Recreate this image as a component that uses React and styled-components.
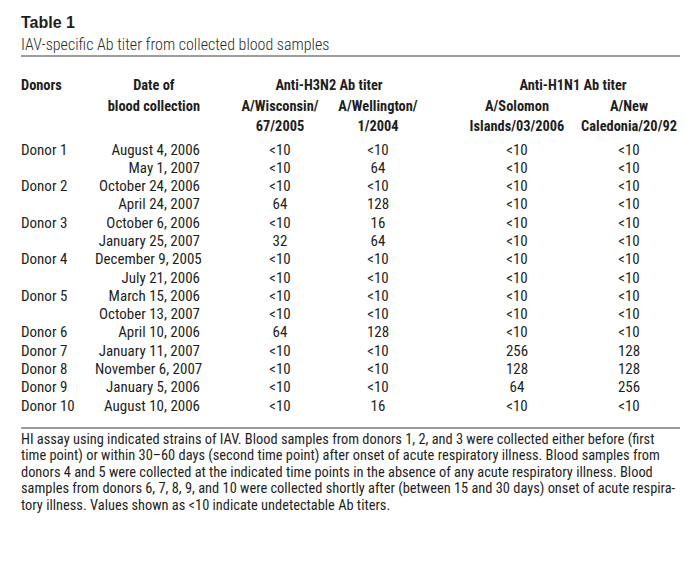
import React from 'react'
import styled, { createGlobalStyle } from 'styled-components'

const GlobalStyle = createGlobalStyle`
  body {
    margin: 0;
    background: #fff;
    color: #1e1e1e;
    font-family: Roboto, "Liberation Sans", sans-serif;
    font-stretch: condensed;
  }
`

const COLS = '74px 105px 31px 98px 98px 34px 112px 112px'

const rows = [
  ['Donor 1', 'August 4, 2006', '<10', '<10', '<10', '<10'],
  ['', 'May 1, 2007', '<10', '64', '<10', '<10'],
  ['Donor 2', 'October 24, 2006', '<10', '<10', '<10', '<10'],
  ['', 'April 24, 2007', '64', '128', '<10', '<10'],
  ['Donor 3', 'October 6, 2006', '<10', '16', '<10', '<10'],
  ['', 'January 25, 2007', '32', '64', '<10', '<10'],
  ['Donor 4', 'December 9, 2005', '<10', '<10', '<10', '<10'],
  ['', 'July 21, 2006', '<10', '<10', '<10', '<10'],
  ['Donor 5', 'March 15, 2006', '<10', '<10', '<10', '<10'],
  ['', 'October 13, 2007', '<10', '<10', '<10', '<10'],
  ['Donor 6', 'April 10, 2006', '64', '128', '<10', '<10'],
  ['Donor 7', 'January 11, 2007', '<10', '<10', '256', '128'],
  ['Donor 8', 'November 6, 2007', '<10', '<10', '128', '128'],
  ['Donor 9', 'January 5, 2006', '<10', '<10', '64', '256'],
  ['Donor 10', 'August 10, 2006', '<10', '16', '<10', '<10'],
]

const valueCols = [4, 5, 7, 8]

function App() {
  return (
    <Page>
      <GlobalStyle />
      <Title>Table 1</Title>
      <Subtitle>IAV-specific Ab titer from collected blood samples</Subtitle>
      <Rule />

      <Header>
        <HeadCell $col="1" $row="1" $align="left">Donors</HeadCell>
        <DateHead>
          Date of<br />
          blood collection
        </DateHead>
        <HeadCell $col="4 / 6" $row="1">Anti-H3N2 Ab titer</HeadCell>
        <HeadCell $col="7 / 9" $row="1">Anti-H1N1 Ab titer</HeadCell>
        <HeadCell $col="4" $row="2">A/Wisconsin/</HeadCell>
        <HeadCell $col="4" $row="3">67/2005</HeadCell>
        <HeadCell $col="5" $row="2">A/Wellington/</HeadCell>
        <HeadCell $col="5" $row="3">1/2004</HeadCell>
        <HeadCell $col="7" $row="2">A/Solomon</HeadCell>
        <HeadCell $col="7" $row="3">Islands/03/2006</HeadCell>
        <HeadCell $col="8" $row="2">A/New</HeadCell>
        <HeadCell $col="8" $row="3">Caledonia/20/92</HeadCell>
      </Header>

      <Body>
        {rows.map((r, i) => (
          <Row key={i}>
            <Cell $col="1" $align="left">{r[0]}</Cell>
            <Cell $col="2" $align="right">{r[1]}</Cell>
            {r.slice(2).map((v, j) => (
              <Cell key={j} $col={valueCols[j]}>{v}</Cell>
            ))}
          </Row>
        ))}
      </Body>

      <Rule $gap="12px" />

      <Note>
        HI assay using indicated strains of IAV. Blood samples from donors 1, 2, and 3 were collected either before (first<br />
        time point) or within 30–60 days (second time point) after onset of acute respiratory illness. Blood samples from<br />
        donors 4 and 5 were collected at the indicated time points in the absence of any acute respiratory illness. Blood<br />
        samples from donors 6, 7, 8, 9, and 10 were collected shortly after (between 15 and 30 days) onset of acute respira-<br />
        tory illness. Values shown as &lt;10 indicate undetectable Ab titers.
      </Note>
    </Page>
  )
}

export default App

const Page = styled.div`
  width: 659px;
  padding: 14px 20px 0 21px;
`

const Title = styled.div`
  font-family: "Liberation Sans", Arial, sans-serif;
  font-stretch: normal;
  font-weight: bold;
  font-size: 16px;
  line-height: 18px;
`

const Subtitle = styled.div`
  font-size: 16px;
  font-weight: 300;
  line-height: 18px;
  margin-top: 4px;
  color: #2a2a2a;
`

const Rule = styled.div`
  height: 2px;
  background: #9d9d9d;
  margin-top: ${p => p.$gap || '1px'};
`

const Header = styled.div`
  display: grid;
  grid-template-columns: ${COLS};
  grid-auto-rows: 20.5px;
  margin-top: 19px;
  font-weight: bold;
  font-size: 14.4px;
  line-height: 20.5px;
`

const HeadCell = styled.div`
  grid-column: ${p => p.$col};
  grid-row: ${p => p.$row};
  text-align: ${p => p.$align || 'center'};
  white-space: nowrap;
`

const DateHead = styled.div`
  grid-column: 2;
  grid-row: 1 / 3;
  justify-self: end;
  text-align: center;
  white-space: nowrap;
`

const Body = styled.div`
  margin-top: 3px;
`

const Row = styled.div`
  display: grid;
  grid-template-columns: ${COLS};
  height: 18.3px;
`

const Cell = styled.div`
  grid-column: ${p => p.$col};
  text-align: ${p => p.$align || 'center'};
  font-size: 15px;
  line-height: 18.3px;
  white-space: nowrap;
`

const Note = styled.p`
  margin: 3px 0 0;
  font-size: 14.4px;
  line-height: 16.4px;
  white-space: nowrap;
`
